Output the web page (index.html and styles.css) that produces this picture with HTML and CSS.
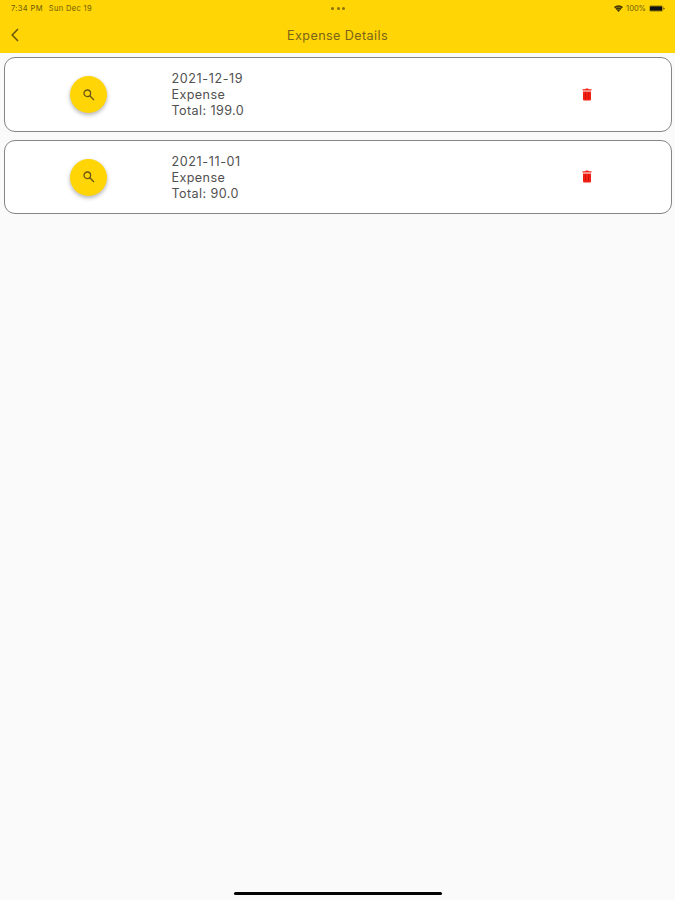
FILE: index.html
```html
<!DOCTYPE html>
<html lang="en">
<head>
    <meta charset="UTF-8">
    <meta name="viewport" content="width=device-width, initial-scale=1.0">
    <title>Expense Details</title>
    <link rel="stylesheet" href="styles.css">
</head>
<body>

    <header class="header">
        <div class="status">
            <div class="status-left"><span>7:34 PM</span><span>Sun Dec 19</span></div>
            <div class="dots"><i></i><i></i><i></i></div>
            <div class="status-right">
                <svg class="wifi" viewBox="0 0 16 12"><path d="M0 3.5a12 12 0 0 1 16 0L8 12z"/><path class="wifi-gap" d="M2 6.2a9 9 0 0 1 12 0M4.7 8.8a5 5 0 0 1 6.6 0"/></svg>
                <span>100%</span>
                <svg class="battery" viewBox="0 0 17 7"><rect x=".3" y=".3" width="14.4" height="6.4" rx="1.6" fill="none" stroke="#8a7400" stroke-width=".5"/><rect x="1" y="1" width="13" height="5" rx="1"/><path d="M15.5 2.4v2.2q1-.3 1-1.1t-1-1.1z"/></svg>
            </div>
        </div>
        <div class="nav">
            <svg class="back" viewBox="0 0 8 14"><path d="M7 1L1.2 7L7 13"/></svg>
            <h1 class="title">Expense Details</h1>
        </div>
    </header>

    <!-- expense list -->
    <main class="list">
        <div class="card">
            <div class="cell">
                <button class="search" aria-label="View"><svg viewBox="0 0 12 12"><circle cx="4.3" cy="4.3" r="3.3"/><path d="M6.8 6.8L11 11"/></svg></button>
            </div>
            <div class="info">
                <p class="date">2021-12-19</p>
                <p>Expense</p>
                <p>Total: 199.0</p>
            </div>
            <div class="cell">
                <svg class="trash" viewBox="0 0 10 13"><path d="M.5 1.2h2.7L4 .4h2l.8.8h2.7v1.2h-9zM1 3.4h8v8.2q0 1-1 1H2q-1 0-1-1z"/><path class="trash-line" d="M3.5 5v6M6.5 5v6"/></svg>
            </div>
        </div>
        <div class="card">
            <div class="cell">
                <button class="search" aria-label="View"><svg viewBox="0 0 12 12"><circle cx="4.3" cy="4.3" r="3.3"/><path d="M6.8 6.8L11 11"/></svg></button>
            </div>
            <div class="info">
                <p class="date">2021-11-01</p>
                <p>Expense</p>
                <p>Total: 90.0</p>
            </div>
            <div class="cell">
                <svg class="trash" viewBox="0 0 10 13"><path d="M.5 1.2h2.7L4 .4h2l.8.8h2.7v1.2h-9zM1 3.4h8v8.2q0 1-1 1H2q-1 0-1-1z"/><path class="trash-line" d="M3.5 5v6M6.5 5v6"/></svg>
            </div>
        </div>
    </main>

    <div class="home-bar"></div>

</body>
</html>
```

FILE: styles.css
```css
* {
    box-sizing: border-box;
}

body {
    margin: 0;
    height: 900px;
    display: flex;
    flex-direction: column;
    background: #fafafa;
    color: #505050;
    font-family: Inter, "Liberation Sans", sans-serif;
}

.header {
    height: 53px;
    background: #ffd505;
}

/* status bar */
.status {
    display: grid;
    grid-template-columns: 1fr auto 1fr;
    align-items: center;
    height: 17px;
    padding: 0 10px 0 11px;
    font-size: 7.5px;
    color: #6b5a08;
}

.status-left {
    display: flex;
    gap: 6px;
    letter-spacing: 0.35px;
}

.status-right {
    display: flex;
    justify-content: flex-end;
    align-items: center;
    gap: 3px;
}

.dots {
    display: flex;
    gap: 2.5px;
}

.dots i {
    width: 3px;
    height: 3px;
    border-radius: 50%;
    background: #8a7208;
}

.wifi {
    width: 9px;
    height: 7px;
    fill: #3c3305;
}

.wifi-gap {
    fill: none;
    stroke: #ffd505;
    stroke-width: 0.8;
}

.battery {
    width: 16px;
    height: 7px;
    fill: #111;
}

/* title bar */
.nav {
    display: grid;
    grid-template-columns: 20px 1fr 20px;
    align-items: center;
    height: 36px;
    padding: 0 11px;
}

.back {
    width: 8px;
    height: 14px;
    fill: none;
    stroke: #66550a;
    stroke-width: 1.5;
}

.title {
    margin: 0;
    text-align: center;
    font-size: 12.6px;
    font-weight: 400;
    letter-spacing: 0.4px;
    color: #7a6418;
}

.list {
    flex: 1;
    display: flex;
    flex-direction: column;
    gap: 8px;
    padding: 4px 3px 0 4px;
}

.card {
    display: grid;
    grid-template-columns: 1fr 2fr 1fr;
    align-items: center;
    height: 74.5px;
    border: 1px solid #858585;
    border-radius: 11px;
    background: #fff;
}

.cell {
    display: flex;
    justify-content: center;
}

.search {
    display: flex;
    align-items: center;
    justify-content: center;
    width: 37px;
    height: 37px;
    margin-top: 1px;
    padding: 0;
    border: none;
    border-radius: 50%;
    background: #ffd505;
    box-shadow: 0 2px 4px rgba(0, 0, 0, 0.3);
}

.search svg {
    width: 12px;
    height: 12px;
    margin-left: 1px;
    fill: none;
    stroke: #6b5517;
    stroke-width: 1.3;
}

.info {
    padding-top: 2px;
}

.info p {
    margin: 0;
    font-size: 12.6px;
    line-height: 16px;
    letter-spacing: 0.4px;
}

.info .date {
    letter-spacing: 0.6px;
}

.trash {
    width: 10px;
    height: 13px;
    margin-right: 1px;
    fill: #f32014;
}

.trash-line {
    fill: none;
    stroke: #c80d08;
    stroke-width: 0.8;
}

/* home indicator */
.home-bar {
    width: 208px;
    height: 3px;
    margin: 0 auto 5px;
    border-radius: 2px;
    background: #000;
}
```
